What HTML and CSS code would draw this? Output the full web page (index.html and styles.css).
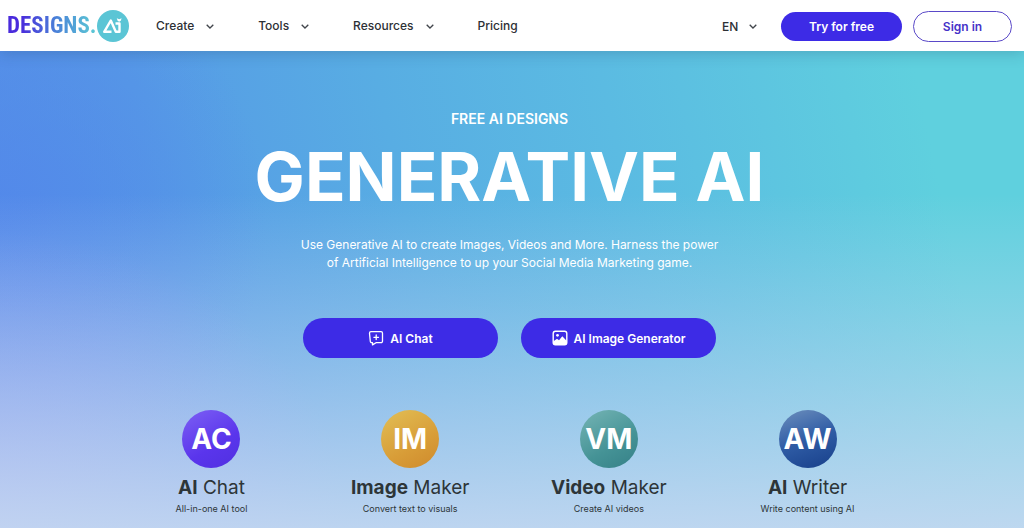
FILE: index.html
```html
<!DOCTYPE html>
<html lang="en">
<head>
<meta charset="utf-8">
<meta name="viewport" content="width=device-width, initial-scale=1">
<title>Designs.ai</title>
<link rel="stylesheet" href="styles.css">
</head>
<body>
<header class="topbar">
  <a class="logo" href="#" aria-label="Designs.ai home">
    <span class="logo-word">DESIGNS.</span>
    <svg class="logo-badge" viewBox="0 0 32 32" aria-hidden="true">
      <circle cx="16" cy="16" r="16" fill="#5bc5d5"/>
      <path d="M14.500 21.800H7.200L13.800 10.500L18.800 21.800H22.500V13.500H18.500" fill="none" stroke="#fff" stroke-width="2.400" stroke-linejoin="round"/>
      <path d="M19.800 8.200l2.400 1 2.400-1-.8 2.600-1.600 1-1.600-1z" fill="#fff"/>
    </svg>
  </a>
  <nav class="menu">
    <button class="menu-item" type="button">Create<svg class="chevron" viewBox="0 0 8 5"><path d="M.7.700 4 4 7.300.700"/></svg></button>
    <button class="menu-item" type="button">Tools<svg class="chevron" viewBox="0 0 8 5"><path d="M.7.700 4 4 7.300.700"/></svg></button>
    <button class="menu-item" type="button">Resources<svg class="chevron" viewBox="0 0 8 5"><path d="M.7.700 4 4 7.300.700"/></svg></button>
    <a class="menu-item" href="#">Pricing</a>
  </nav>
  <div class="account">
    <label class="language">
      <select class="language-select" aria-label="Language"><option>EN</option></select>
      <svg class="chevron" viewBox="0 0 8 5"><path d="M.7.700 4 4 7.300.700"/></svg>
    </label>
    <a class="pill pill-solid" href="#">Try for free</a>
    <a class="pill pill-outline" href="#">Sign in</a>
  </div>
</header>
<main class="hero">
  <p class="eyebrow">FREE AI DESIGNS</p>
  <h1 class="title">GENERATIVE AI</h1>
  <p class="lead">Use Generative AI to create Images, Videos and More. Harness the power<br>of Artificial Intelligence to up your Social Media Marketing game.</p>
  <div class="actions">
    <button class="action" type="button">
      <svg class="action-icon" viewBox="0 0 16 16" fill="none" stroke="#fff" stroke-width="1.300" stroke-linejoin="round" stroke-linecap="round"><path d="M3 1.700h10a1.500 1.500 0 0 1 1.500 1.500v8a1.500 1.500 0 0 1-1.500 1.500H8L4.500 14.900v-2.200H3.800a1.500 1.500 0 0 1-1.500-1.500l-.8-8A1.500 1.500 0 0 1 3 1.700z"/><path d="M8.200 5v4.600M5.900 7.300h4.600"/></svg>
      AI Chat
    </button>
    <button class="action" type="button">
      <svg class="action-icon" viewBox="0 0 16 16"><rect x="1.200" y="1.200" width="13.600" height="13.600" rx="2.200" fill="none" stroke="#fff" stroke-width="1.400"/><circle cx="5.500" cy="5.300" r="1.400" fill="#fff"/><path d="M1.200 11.500 5 8.800l2 1.500 3.300-4 4.500 4.700v2a1.800 1.800 0 0 1-1.800 1.800H3a1.800 1.800 0 0 1-1.800-1.800z" fill="#fff"/></svg>
      AI Image Generator
    </button>
  </div>
  <section class="tools">
    <a class="tool" href="#"><span class="disc disc-chat">AC</span><span class="tool-name"><b>AI</b> Chat</span><span class="tool-note">All-in-one AI tool</span></a>
    <a class="tool" href="#"><span class="disc disc-image">IM</span><span class="tool-name"><b>Image</b> Maker</span><span class="tool-note">Convert text to visuals</span></a>
    <a class="tool" href="#"><span class="disc disc-video">VM</span><span class="tool-name"><b>Video</b> Maker</span><span class="tool-note">Create AI videos</span></a>
    <a class="tool" href="#"><span class="disc disc-writer">AW</span><span class="tool-name"><b>AI</b> Writer</span><span class="tool-note">Write content using AI</span></a>
  </section>
</main>
</body>
</html>
```
FILE: styles.css
```css
* { box-sizing: border-box; }
body {
  margin: 0;
  min-height: 100vh;
  display: flex;
  flex-direction: column;
  font-family: Inter, "Open Sans", sans-serif;
  color: #2d3035;
}
a { color: inherit; text-decoration: none; }
button, select { font: inherit; color: inherit; border: 0; background: none; padding: 0; cursor: pointer; }

.topbar {
  position: relative;
  z-index: 1;
  display: flex;
  align-items: center;
  padding: 10px 12px 9px 7px;
  background: #fff;
  box-shadow: 0 2px 14px rgba(30, 60, 90, .24);
  font-size: 12px;
  font-weight: 500;
}
.logo { display: flex; align-items: center; width: 121px; }
.logo-word {
  flex: 1;
  font: bold 23px/32px "Liberation Sans Narrow", "Roboto Condensed", "Liberation Sans", sans-serif;
  background: linear-gradient(90deg, #4a2bdc 15%, #4a82d8 55%, #5bc5d5 95%);
  background-clip: text;
  color: transparent;
}
.logo-badge { flex: none; width: 32px; height: 32px; }
.menu { display: flex; gap: 44px; margin-left: 28px; }
.menu-item { display: flex; align-items: center; gap: 12px; line-height: 20px; }
.chevron { width: 8px; height: 5px; fill: none; stroke: #41454b; stroke-width: 1.3; }
.account { display: flex; align-items: center; gap: 11px; margin-left: auto; }
.language { display: flex; align-items: center; gap: 10px; margin-right: 13px; }
.language-select { appearance: none; }
.pill { border-radius: 16px; font-weight: 600; text-align: center; }
.pill-solid { width: 121px; line-height: 29px; background: #3d2be6; color: #fff; }
.pill-outline { width: 99px; line-height: 29px; border: 1px solid #5a49c8; color: #4632c8; }

.hero {
  flex: 1;
  display: flex;
  flex-direction: column;
  align-items: center;
  padding: 58px 5px 12px 0;
  color: #fff;
  text-align: center;
  background:
    linear-gradient(180deg, rgba(197, 216, 241, 0) 30%, rgba(197, 216, 241, .5) 68%, rgba(197, 216, 241, .92) 100%),
    radial-gradient(ellipse 34% 62% at 0% 100%, rgba(170, 150, 245, .6), rgba(150, 150, 240, 0)),
    radial-gradient(ellipse 26% 60% at 0% 36%, rgba(82, 134, 234, .8), rgba(82, 134, 234, 0)),
    linear-gradient(78deg, #5590e8 2%, #569ae6 20%, #58ade3 42%, #5bbbe2 62%, #5fd0de 90%);
}
.eyebrow { margin: 0; font-size: 14px; line-height: 20px; font-weight: 600; }
.title { margin: 8px 0 0; font-size: 67px; line-height: 80px; font-weight: 700; }
.lead { margin: 19px 0 0; font-size: 12px; line-height: 18px; }
.actions { display: flex; gap: 23px; margin-top: 46px; }
.action {
  display: flex;
  align-items: center;
  justify-content: center;
  gap: 6px;
  width: 195px;
  height: 40px;
  border-radius: 20px;
  background: #3d2be6;
  font-size: 12px;
  font-weight: 600;
}
.action-icon { width: 16px; height: 16px; }
.tools { display: grid; grid-template-columns: repeat(4, 1fr); width: 78%; margin-top: 52px; }
.tool { display: flex; flex-direction: column; align-items: center; color: #2d3538; }
.disc {
  width: 58px;
  border-radius: 50%;
  line-height: 58px;
  font-size: 28px;
  font-weight: 700;
  color: #fff;
}
.disc-chat { background: linear-gradient(150deg, #7d60f4, #5a35ec 60%, #5030e0); }
.disc-image { background: linear-gradient(150deg, #e2bf55, #d89d38 60%, #cf8a2c); }
.disc-video { background: linear-gradient(150deg, #76b5b5, #459396 60%, #358087); }
.disc-writer { background: linear-gradient(160deg, #6d8fbd, #2f5ca5 50%, #173f8a); }
.tool-name { margin-top: 6px; font-size: 19px; line-height: 28px; }
.tool-name b { font-weight: 700; }
.tool-note { font-size: 9px; line-height: 14px; }
```
